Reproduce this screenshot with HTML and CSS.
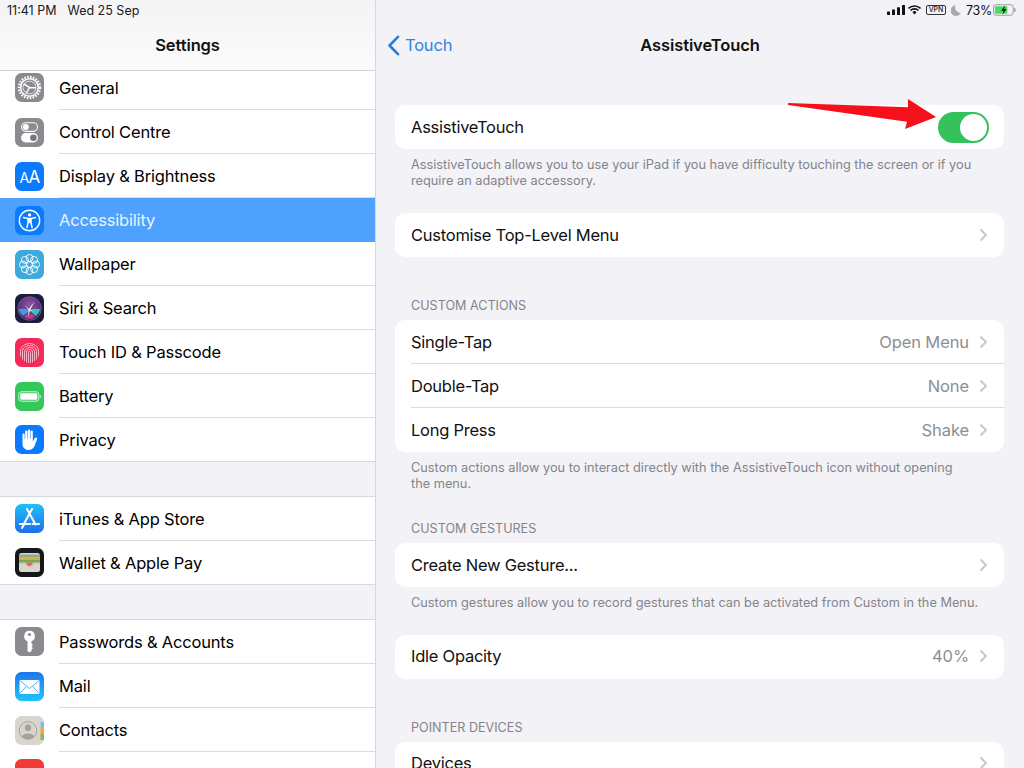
FILE: index.html
```html
<!DOCTYPE html>
<html lang="en">
<head>
<meta charset="utf-8">
<title>AssistiveTouch</title>
<link rel="stylesheet" href="styles.css">
</head>
<body>
<div class="screen">
  <aside class="side">
    <header class="side-head">
      <div class="status-left"><span>11:41 PM</span><span>Wed 25 Sep</span></div>
      <h1 class="title">Settings</h1>
    </header>
    <div class="side-list">
      <ul class="group">
        <li class="row first"><span class="icon gray"><svg viewBox="0 0 29 29"><circle cx="14.5" cy="14.5" r="10.6" fill="none" stroke="#fff" stroke-width="2.2" stroke-dasharray="1.6 1.35"/><circle cx="14.5" cy="14.5" r="8.8" fill="none" stroke="#fff" stroke-width="1.5"/><circle cx="14.5" cy="14.500" r="6.400" fill="none" stroke="#fff" stroke-width=".7"/><path d="M14.500 14.500L8.700 10.800M14.500 14.500L21 14.800M14.500 14.500L11.200 20.500" stroke="#fff" stroke-width="1.500" fill="none"/></svg></span><span class="label">General</span></li>
        <li class="row"><span class="icon gray"><svg viewBox="0 0 29 29"><rect x="6.500" y="4.800" width="16" height="8.600" rx="4.300" fill="none" stroke="#fff" stroke-width="1.100"/><circle cx="10.800" cy="9.100" r="3" fill="#fff"/><rect x="6" y="15" width="17" height="9.400" rx="4.700" fill="#fff"/><circle cx="18.400" cy="19.700" r="3.300" fill="#77777c"/></svg></span><span class="label">Control Centre</span></li>
        <li class="row"><span class="icon blue"><svg viewBox="0 0 29 29"><text class="aa-small" x="4.400" y="21">A</text><text class="aa-big" x="13.600" y="21">A</text></svg></span><span class="label">Display &amp; Brightness</span></li>
        <li class="row selected"><span class="icon blue"><svg viewBox="0 0 29 29"><circle cx="14.500" cy="14.500" r="10.200" fill="none" stroke="#fff" stroke-width="1.400"/><circle cx="14.500" cy="8.900" r="1.700" fill="#fff"/><path d="M8.500 11.400L12.600 12.400H16.400L20.500 11.400M14.500 12.400V16.400M13 13V17L11.900 21.600M16 13V17L17.100 21.600" fill="none" stroke="#fff" stroke-width="1.500" stroke-linecap="round"/></svg></span><span class="label">Accessibility</span></li>
        <li class="row"><span class="icon sky"><svg viewBox="0 0 29 29"><g fill="none" stroke="#fff" stroke-width=".9"><circle cx="14.500" cy="8" r="3.500"/><circle cx="19.100" cy="9.900" r="3.500"/><circle cx="21" cy="14.500" r="3.500"/><circle cx="19.100" cy="19.100" r="3.500"/><circle cx="14.500" cy="21" r="3.500"/><circle cx="9.900" cy="19.100" r="3.500"/><circle cx="8" cy="14.500" r="3.500"/><circle cx="9.900" cy="9.900" r="3.500"/><circle cx="14.500" cy="14.500" r="2.800"/></g></svg></span><span class="label">Wallpaper</span></li>
        <li class="row"><span class="icon siri"><svg viewBox="0 0 29 29"><defs><radialGradient id="siriGlow" cx=".5" cy=".35" r=".7"><stop offset="0" stop-color="#8a5c9c"/><stop offset=".6" stop-color="#6a2f84"/><stop offset="1" stop-color="#2a2358"/></radialGradient></defs><circle cx="14.500" cy="14.500" r="11.800" fill="url(#siriGlow)" stroke="#77729a" stroke-width=".7"/><path d="M9 22.500Q14.500 17 20 22.500Q15 27.500 9 22.500Z" fill="#c93c90" opacity=".9"/><path d="M3.500 15Q10 14 14.500 16Q11 20 8 22Q5 19 3.500 15Z" fill="#3aa8e6" opacity=".9"/><path d="M25.500 15Q19 14 14.500 16Q18 20 21 22Q24 19 25.500 15Z" fill="#35cfc0" opacity=".9"/><path d="M19.500 7.500L15.300 15.500L13 22.500L13.600 15.300Z" fill="#f2fbff"/><path d="M9.500 11L14.500 15.500L19.500 17.500L14 16.500Z" fill="#dff3fb"/></svg></span><span class="label">Siri &amp; Search</span></li>
        <li class="row"><span class="icon red"><svg viewBox="0 0 29 29"><g fill="none" stroke="#fbc6d2" stroke-width=".9" stroke-linecap="round"><path d="M5.500 18V13.500C5.500 3 23.500 3 23.500 13.500V18"/><path d="M7.500 21V13.800C7.500 5.500 21.500 5.500 21.500 13.800V21"/><path d="M9.500 22.500V14C9.500 8 19.500 8 19.500 14V22.500"/><path d="M11.500 24V14.300C11.500 10.300 17.500 10.300 17.500 14.300V24"/><path d="M13.500 24.500V14.500C13.500 12.800 15.500 12.800 15.500 14.500V24.500"/></g></svg></span><span class="label">Touch ID &amp; Passcode</span></li>
        <li class="row"><span class="icon green"><svg viewBox="0 0 29 29"><rect x="3.800" y="9.800" width="20" height="9.400" rx="2.500" fill="none" stroke="#d6f3dd" stroke-width="1"/><rect x="5.300" y="11.300" width="17" height="6.400" rx="1.200" fill="#fff"/><rect x="24.700" y="13" width="1" height="3" fill="#d6f3dd"/></svg></span><span class="label">Battery</span></li>
        <li class="row last"><span class="icon blue"><svg viewBox="0 0 29 29"><path d="M7.500 9.500C7.500 8 9.700 8 9.700 9.500V14H10.200V6.500C10.200 5 12.400 5 12.400 6.500V13.500H12.900V5.500C12.900 4 15.100 4 15.100 5.500V13.500H15.600V6.500C15.600 5 17.800 5 17.800 6.500V16.500L19.500 13.500C20.700 11.800 22.800 12.800 22 14.500L19.500 21C18.500 23.600 16 25 13.500 25C10 25 7.500 22.500 7.500 19Z" fill="#fff"/></svg></span><span class="label">Privacy</span></li>
      </ul>
      <ul class="group">
        <li class="row"><span class="icon appstore"><svg viewBox="0 0 29 29"><path d="M17 5L9 19.800M12 5L20.500 20.500M5 20H15M17.500 20H24M7 24L9 20.500" fill="none" stroke="#fff" stroke-width="2" stroke-linecap="round"/></svg></span><span class="label">iTunes &amp; App Store</span></li>
        <li class="row last"><span class="icon wallet"><svg viewBox="0 0 29 29"><rect x="4" y="5" width="21" height="19" rx="2.500" fill="#d9d5c8"/><rect x="4" y="6.500" width="21" height="3" fill="#8fa6a0"/><rect x="4" y="9.500" width="21" height="2.500" fill="#c8b43e"/><rect x="4" y="12" width="21" height="2.500" fill="#7aa84a"/><path d="M4 14.500H10.500C11.500 17.500 13 18.500 14.500 18.500C16 18.500 17.500 17.500 18.500 14.500H25V15.500H19C18 18 16 19 14.500 19C13 19 11 18 10 15.500H4Z" fill="#b9b5a8"/><path d="M11 14.500H18C17 17 16 18 14.500 18C13 18 12 17 11 14.500Z" fill="#df6a50"/></svg></span><span class="label">Wallet &amp; Apple Pay</span></li>
      </ul>
      <ul class="group">
        <li class="row"><span class="icon gray"><svg viewBox="0 0 29 29"><path d="M14.500 3.800A5.400 5.400 0 0 1 16.500 14.200V16.500L18 18L16.500 19.500L18 21L16.500 22.500V24L14.500 25.500L12.500 24V14.200A5.400 5.400 0 0 1 14.500 3.800Z" fill="#fff"/><circle cx="14.500" cy="7.500" r="1.600" fill="#8a8a8f"/></svg></span><span class="label">Passwords &amp; Accounts</span></li>
        <li class="row"><span class="icon mail"><svg viewBox="0 0 29 29"><rect x="4.500" y="8" width="20" height="14" rx="1" fill="#fff"/><path d="M4.800 8.500L14.500 16.500L24.200 8.500M4.800 21.500L11.500 14.200M24.200 21.500L17.500 14.200" fill="none" stroke="#5bb0f5" stroke-width="1"/></svg></span><span class="label">Mail</span></li>
        <li class="row"><span class="icon contacts"><svg viewBox="0 0 29 29"><rect x="25.500" y="6" width="3.500" height="6" fill="#7bbfe8"/><rect x="25.500" y="12" width="3.500" height="6" fill="#f2a93b"/><rect x="25.500" y="18" width="3.500" height="6" fill="#7cc05c"/><circle cx="13" cy="14.500" r="8.800" fill="none" stroke="#a5a29c" stroke-width="1"/><circle cx="13" cy="11.800" r="3.200" fill="#a5a29c"/><path d="M6.800 20.500C8 16.500 18 16.500 19.200 20.500C17.500 22.500 15 23.300 13 23.300C11 23.300 8.500 22.500 6.800 20.500Z" fill="#a5a29c"/></svg></span><span class="label">Contacts</span></li>
        <li class="row"><span class="icon calendar"></span><span class="label">Calendar</span></li>
      </ul>
    </div>
  </aside>
  <main class="detail">
    <header class="detail-head">
      <div class="status-right">
        <svg class="st-signal" viewBox="0 0 18 10"><rect x="0" y="6.500" width="3" height="3.500" rx=".6"/><rect x="5" y="4.500" width="3" height="5.500" rx=".6"/><rect x="10" y="2.300" width="3" height="7.700" rx=".6"/><rect x="15" y="0" width="3" height="10" rx=".6"/></svg>
        <svg class="st-wifi" viewBox="0 0 14 10"><path d="M.5 3.300A9.300 9.300 0 0 1 13.500 3.300M2.700 5.500A6.200 6.200 0 0 1 11.300 5.500" fill="none" stroke="#111" stroke-width="1.700"/><path d="M4.800 7.300A3.100 3.100 0 0 1 9.200 7.300L7 9.800Z" fill="#111"/></svg>
        <span class="st-vpn">VPN</span>
        <svg class="st-moon" viewBox="0 0 10 11"><path d="M4.500.3A5.300 5.300 0 1 0 9.800 7.800A5.500 5.500 0 0 1 4.500.3Z" fill="#a9a9ad"/></svg>
        <span class="st-pct">73%</span>
        <svg class="st-batt" viewBox="0 0 24 12"><rect x=".5" y=".5" width="20.500" height="11" rx="2.500" fill="none" stroke="#9a9a9e"/><rect x="2" y="2" width="13" height="8" rx="1" fill="#4cd964"/><rect x="22" y="4" width="1.500" height="4" rx=".7" fill="#9a9a9e"/><path d="M12.500 1L8.500 6.700H11L9.800 11L14.200 5H11.600Z" fill="#111"/></svg>
      </div>
      <div class="nav">
        <div class="back"><svg class="back-icon" viewBox="0 0 13 21"><path d="M11 1.800L2.500 10.500L11 19.200" fill="none" stroke="#1f7fe0" stroke-width="2.600" stroke-linecap="round" stroke-linejoin="round"/></svg><span>Touch</span></div>
        <h2 class="title">AssistiveTouch</h2>
      </div>
    </header>

    <section class="section s-top">
      <div class="card">
        <div class="item toggle-item"><span class="label">AssistiveTouch</span><span class="switch"><span class="knob"></span></span></div>
      </div>
      <p class="note">AssistiveTouch allows you to use your iPad if you have difficulty touching the screen or if you<br>require an adaptive accessory.</p>
    </section>

    <section class="section s-gap">
      <div class="card">
        <div class="item"><span class="label">Customise Top-Level Menu</span><svg class="chev" viewBox="0 0 9 14"><path d="M1.500 1.500L7 7L1.500 12.500" /></svg></div>
      </div>
    </section>

    <section class="section s-head">
      <h3 class="cap">CUSTOM ACTIONS</h3>
      <div class="card">
        <div class="item"><span class="label">Single-Tap</span><span class="value">Open Menu</span><svg class="chev" viewBox="0 0 9 14"><path d="M1.500 1.500L7 7L1.500 12.500" /></svg></div>
        <div class="item"><span class="label">Double-Tap</span><span class="value">None</span><svg class="chev" viewBox="0 0 9 14"><path d="M1.500 1.500L7 7L1.500 12.500" /></svg></div>
        <div class="item"><span class="label">Long Press</span><span class="value">Shake</span><svg class="chev" viewBox="0 0 9 14"><path d="M1.500 1.500L7 7L1.500 12.500" /></svg></div>
      </div>
      <p class="note">Custom actions allow you to interact directly with the AssistiveTouch icon without opening<br>the menu.</p>
    </section>

    <section class="section s-head2">
      <h3 class="cap">CUSTOM GESTURES</h3>
      <div class="card">
        <div class="item"><span class="label">Create New Gesture...</span><svg class="chev" viewBox="0 0 9 14"><path d="M1.500 1.500L7 7L1.500 12.500" /></svg></div>
      </div>
      <p class="note">Custom gestures allow you to record gestures that can be activated from Custom in the Menu.</p>
    </section>

    <section class="section s-idle">
      <div class="card">
        <div class="item"><span class="label">Idle Opacity</span><span class="value">40%</span><svg class="chev" viewBox="0 0 9 14"><path d="M1.500 1.500L7 7L1.500 12.500" /></svg></div>
      </div>
    </section>

    <section class="section s-head">
      <h3 class="cap">POINTER DEVICES</h3>
      <div class="card">
        <div class="item"><span class="label">Devices</span><svg class="chev" viewBox="0 0 9 14"><path d="M1.500 1.500L7 7L1.500 12.500" /></svg></div>
      </div>
    </section>

    <svg class="arrow" viewBox="0 0 150 32"><path d="M0 4L120 8.300L120 0L148 18L117 30L119 22.700L0 6Z" fill="#f5101c"/></svg>
  </main>
</div>
</body>
</html>
```
FILE: styles.css
```css
* { box-sizing: border-box; }
html, body { margin: 0; padding: 0; }
body {
  width: 1024px;
  height: 768px;
  overflow: hidden;
  background: #f2f2f7;
  font-family: Inter, "Liberation Sans", sans-serif;
  color: #000;
}
ul { list-style: none; margin: 0; padding: 0; }
h1, h2, h3, p { margin: 0; }

.screen { display: flex; height: 768px; overflow: hidden; }

/* Sidebar */
.side {
  width: 376px;
  flex: none;
  height: 768px;
  overflow: hidden;
  border-right: 1px solid #d8d8dc;
  background: #f2f2f7;
}
.side-head {
  height: 71px;
  background: linear-gradient(#f4f4f6, #fbfbfb);
  border-bottom: 1px solid #d3d3d6;
}
.status-left {
  height: 20px;
  padding: 1px 0 0 7px;
  display: flex;
  gap: 11px;
  align-items: center;
  font-size: 12.500px;
  line-height: 19px;
  color: #1a1a1a;
}
.title {
  font-size: 16.500px;
  font-weight: 600;
  line-height: 50px;
  text-align: center;
  letter-spacing: -.1px;
  color: #111;
}
.side-list { display: flex; flex-direction: column; gap: 34px; }
.group { background: #fff; border-bottom: 1px solid #d8d8dc; border-top: 1px solid #d8d8dc; }
.group:first-child { border-top: 0; }
.row {
  position: relative;
  height: 44px;
  display: flex;
  align-items: center;
  padding-left: 15px;
  gap: 15px;
}
.row.first { height: 39px; padding-bottom: 6px; }
.row::after {
  content: "";
  position: absolute;
  left: 59px;
  right: 0;
  bottom: 0;
  height: 1px;
  background: #dcdcdf;
}
.row.last { height: 43px; }
.row.last::after, .row.selected::after { display: none; }
.row.selected { background: #4ea1fc; color: #e9f3ff; }
.group > .row:first-child:not(.first) { padding-bottom: 1px; }
.label { font-size: 16.500px; letter-spacing: -.25px; white-space: nowrap; color: inherit; }
.row .label { letter-spacing: -.18px; }

.icon { width: 29px; height: 29px; flex: none; border-radius: 6.500px; overflow: hidden; display: block; }
.icon svg { display: block; width: 29px; height: 29px; }
.gray { background: #8a8a8f; }
.blue { background: #0a7bff; }
.sky { background: #3eaadb; }
.siri { background: #1b1c3e; }
.red { background: #f52a5a; }
.green { background: #35c759; }
.appstore { background: linear-gradient(#1fc0fb, #1c6fe9); }
.wallet { background: #17171a; }
.mail { background: linear-gradient(#1c76ea, #20c4fb); }
.contacts { background: #d8d5ce; }
.calendar { background: linear-gradient(#f23b37 0 9px, #fff 9px); align-self: flex-start; margin-top: 7px; }
.aa-small { font: 400 14px Inter, sans-serif; fill: #fff; }
.aa-big { font: 400 17px Inter, sans-serif; fill: #fff; }

/* Detail */
.detail { position: relative; flex: 1; min-width: 0; height: 768px; overflow: hidden; padding: 0 20px 0 19px; }
.detail-head { margin: 0 -20px 0 -19px; height: 70px; }
.status-right {
  height: 20px;
  padding-right: 8px;
  display: flex;
  justify-content: flex-end;
  align-items: center;
}
.st-signal { width: 18px; height: 10px; fill: #111; margin-right: 3px; }
.st-wifi { width: 13px; height: 10px; margin-right: 5px; }
.st-vpn {
  width: 20px;
  height: 10px;
  border: 1px solid #333;
  border-radius: 2px;
  font-size: 7px;
  line-height: 8px;
  font-weight: 500;
  text-align: center;
  margin-right: 5px;
  color: #222;
}
.st-moon { width: 10px; height: 11px; margin-right: 5px; }
.st-pct { width: 24px; font-size: 12.500px; letter-spacing: -.3px; white-space: nowrap; color: #111; margin-right: 3px; }
.st-batt { width: 23px; height: 12px; }
.nav { position: relative; height: 50px; }
.back {
  position: absolute;
  left: 11px;
  top: 0;
  height: 50px;
  display: flex;
  align-items: center;
  gap: 5px;
  font-size: 16.500px;
  letter-spacing: -.2px;
  color: #2e86de;
}
.back-icon { width: 13px; height: 21px; }

.section { display: flex; flex-direction: column; }
.s-top { margin-top: 35px; }
.s-gap { margin-top: 24px; }
.s-idle { margin-top: 23.500px; }
.s-head { margin-top: 40px; }
.s-head2 { margin-top: 29px; }
.card { background: #fff; border-radius: 10px; overflow: hidden; }
.item {
  position: relative;
  height: 44px;
  display: flex;
  align-items: center;
  padding: 0 16px 1px 16px;
}
.toggle-item { padding: 0 15px 0 16px; }
.item + .item::before {
  content: "";
  position: absolute;
  top: -1px;
  left: 16px;
  right: 0;
  height: 1px;
  background: #dcdcdf;
}
.item .label { margin-right: auto; color: #111; }
.value { font-size: 16.500px; letter-spacing: -.1px; color: #8e8e92; margin-right: 10px; }
.chev { width: 9px; height: 14px; fill: none; stroke: #c5c5c8; stroke-width: 1.800; }
.switch {
  width: 51px;
  height: 31px;
  border-radius: 16px;
  background: #35c25c;
  padding: 2px;
  display: flex;
  justify-content: flex-end;
}
.knob { width: 27px; height: 27px; border-radius: 50%; background: #fff; }
.note {
  padding: 8px 16px 0;
  font-size: 12.750px;
  line-height: 16px;
  color: #84848a;
  white-space: nowrap;
}
.cap {
  font-size: 12.600px;
  font-weight: 400;
  line-height: 16px;
  color: #84848a;
  padding: 0 16px;
  margin-bottom: 7px;
}
.s-head .cap { padding-top: 1px; line-height: 15px; }
.s-head2 .cap { margin-bottom: 6px; }
.arrow { position: absolute; left: 412px; top: 99px; width: 150px; height: 32px; }
```
